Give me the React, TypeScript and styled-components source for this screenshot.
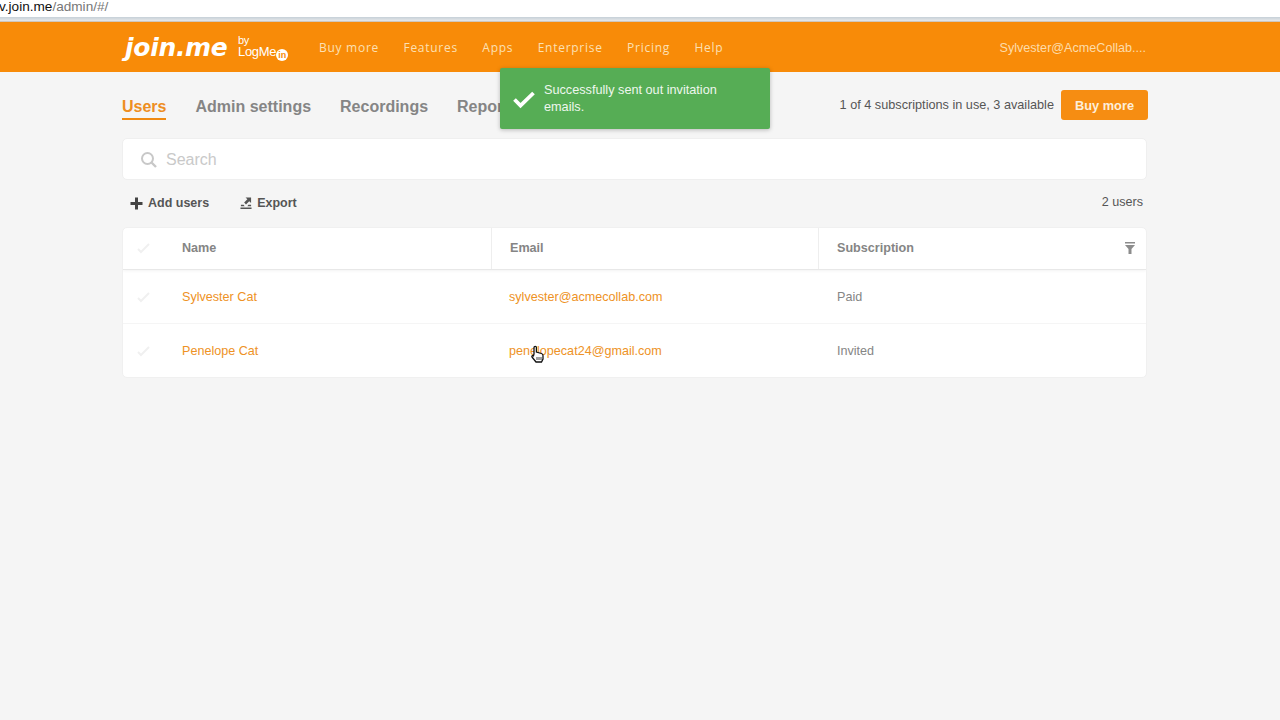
import styled, { createGlobalStyle } from 'styled-components';

const GlobalStyle = createGlobalStyle`
  html, body {
    margin: 0;
    padding: 0;
    height: 100%;
    background: #f5f5f5;
    font-family: "Liberation Sans", Arial, sans-serif;
    overflow: hidden;
  }
`;

const Page = styled.div`
  position: relative;
  height: 720px;
  background: #f5f5f5;
`;

const UrlBar = styled.div`
  height: 17px;
  background: #fff;
  font-size: 13.6px;
  line-height: 14px;
  color: #777;
  white-space: nowrap;
  overflow: hidden;
  b {
    font-weight: normal;
    color: #111;
    margin-left: -1px;
  }
`;

const UrlEdge = styled.div`
  height: 5px;
  background: linear-gradient(#c6d0d8, #e6e8ea 80%, #b9a68c);
`;

const TopBar = styled.header`
  height: 49px;
  background: #f88b08;
  display: flex;
  align-items: center;
  padding: 1px 134px 0 122px;
`;

const Logo = styled.div`
  display: flex;
  align-items: center;
  width: 197px;
  color: #fff;
`;

const LogoMark = styled.span`
  font-family: "DejaVu Sans", sans-serif;
  font-weight: bold;
  font-style: italic;
  font-size: 25px;
  letter-spacing: -0.3px;
  line-height: 30px;
  width: 113px;
  margin-left: 3px;
`;

const LogoBy = styled.span`
  display: flex;
  flex-direction: column;
  line-height: 11px;
  letter-spacing: -0.3px;
  color: #fff;
`;

const LogoByWord = styled.span`
  font-size: 11px;
`;

const LogoName = styled.span`
  font-size: 13px;
  white-space: nowrap;
`;

const LogoIn = styled.i`
  display: inline-block;
  width: 12px;
  height: 12px;
  line-height: 12px;
  border-radius: 50%;
  background: #fff;
  color: #f88b08;
  font-style: normal;
  font-weight: bold;
  font-size: 9px;
  text-align: center;
  letter-spacing: 0;
  vertical-align: -2px;
`;

const MainNav = styled.nav`
  display: flex;
  gap: 24.5px;
  flex: 1;
`;

const NavLink = styled.a`
  font-family: "Open Sans", sans-serif;
  font-size: 12px;
  letter-spacing: 0.72px;
  color: #fce0b4;
`;

const Account = styled.div`
  font-size: 12.6px;
  color: #fddcaa;
`;

const Content = styled.main`
  width: 1025px;
  margin-left: 122px;
`;

const TabRow = styled.div`
  height: 66px;
  display: flex;
  align-items: flex-start;
  justify-content: space-between;
`;

const Tabs = styled.div`
  display: flex;
  gap: 29px;
  padding-top: 25px;
`;

const Tab = styled.a<{ $active?: boolean }>`
  font-size: 16px;
  line-height: 20px;
  font-weight: bold;
  padding-bottom: 1px;
  color: ${(props) => (props.$active ? '#ee8e22' : '#858585')};
  border-bottom: 2px solid ${(props) => (props.$active ? '#f08a12' : 'transparent')};
`;

const Usage = styled.div`
  display: flex;
  align-items: center;
  gap: 7px;
  margin-right: -1px;
  padding-top: 18px;
  font-size: 12.7px;
  color: #555;
`;

const BuyButton = styled.button`
  width: 87px;
  height: 30px;
  border: 0;
  border-radius: 3px;
  background: #f68d12;
  color: #fdeeda;
  font-family: inherit;
  font-size: 12.8px;
  font-weight: bold;
  padding: 0;
`;

const Toast = styled.div`
  position: absolute;
  left: 500px;
  top: 68px;
  width: 270px;
  height: 61px;
  box-sizing: border-box;
  display: flex;
  align-items: center;
  gap: 8px;
  padding: 0 24px 0 12px;
  background: #56ad55;
  border-radius: 2px;
  box-shadow: 0 1px 4px rgba(0, 0, 0, 0.25);
  color: #eef7ee;
  font-size: 12.7px;
  line-height: 17px;
`;

const ToastIcon = styled.svg`
  flex: none;
`;

const Search = styled.div`
  height: 39px;
  display: flex;
  align-items: center;
  gap: 8px;
  padding: 1px 0 0 17px;
  background: #fff;
  border: 1px solid #efefef;
  border-radius: 5px;
  color: #c9c9c9;
  font-size: 16px;
`;

const Toolbar = styled.div`
  height: 47px;
  display: flex;
  align-items: center;
  justify-content: space-between;
`;

const Actions = styled.div`
  display: flex;
  gap: 31px;
  padding: 0 0 1px 8px;
`;

const Action = styled.a`
  display: flex;
  align-items: center;
  gap: 5px;
  font-size: 12.5px;
  font-weight: bold;
  color: #555;
`;

const UserCount = styled.div`
  font-size: 12.6px;
  color: #555;
  margin: -3px 4px 0 0;
`;

const Table = styled.div`
  background: #fff;
  border: 1px solid #f0f0f0;
  border-radius: 5px;
  overflow: hidden;
`;

const Row = styled.div<{ $head?: boolean; $last?: boolean }>`
  display: grid;
  grid-template-columns: 368px 327px 1fr;
  align-items: stretch;
  height: ${(props) => (props.$head ? '41px' : '53px')};
  border-bottom: ${(props) =>
    props.$head ? '1px solid #e8e8e8' : props.$last ? '0' : '1px solid #f5f5f5'};
  box-shadow: ${(props) => (props.$head ? '0 1px 3px rgba(0, 0, 0, 0.05)' : 'none')};
`;

const Cell = styled.div<{ $head?: boolean; $inset: number; $divided?: boolean }>`
  position: relative;
  display: flex;
  align-items: center;
  gap: 30px;
  padding-left: ${(props) => props.$inset}px;
  padding-bottom: ${(props) => (props.$head ? '1px' : '0')};
  border-left: ${(props) => (props.$divided ? '1px solid #eeeeee' : '0')};
  font-size: 12.6px;
  font-weight: ${(props) => (props.$head ? 'bold' : 'normal')};
  color: #858585;
`;

const OrangeLink = styled.a`
  color: #ee9225;
`;

const FilterIcon = styled.svg`
  position: absolute;
  right: 11px;
  top: 14px;
`;

const Cursor = styled.svg`
  position: absolute;
  left: 530px;
  top: 345px;
`;

function RowCheck() {
  return (
    <svg width="16" height="12" viewBox="0 0 16 12" fill="none">
      <path d="M2 7l3 3 8-8" stroke="#f0f0f0" strokeWidth="2" />
    </svg>
  );
}

function App() {
  const users = [
    { name: 'Sylvester Cat', email: 'sylvester@acmecollab.com', plan: 'Paid' },
    { name: 'Penelope Cat', email: 'penelopecat24@gmail.com', plan: 'Invited' },
  ];

  return (
    <Page>
      <GlobalStyle />
      <UrlBar><b>v.join.me</b>/admin/#/</UrlBar>
      <UrlEdge />
      <TopBar>
        <Logo>
          <LogoMark>join.me</LogoMark>
          <LogoBy>
            <LogoByWord>by</LogoByWord>
            <LogoName>LogMe<LogoIn>in</LogoIn></LogoName>
          </LogoBy>
        </Logo>
        <MainNav>
          <NavLink>Buy more</NavLink>
          <NavLink>Features</NavLink>
          <NavLink>Apps</NavLink>
          <NavLink>Enterprise</NavLink>
          <NavLink>Pricing</NavLink>
          <NavLink>Help</NavLink>
        </MainNav>
        <Account>Sylvester@AcmeCollab....</Account>
      </TopBar>
      <Content>
        <TabRow>
          <Tabs>
            <Tab $active>Users</Tab>
            <Tab>Admin settings</Tab>
            <Tab>Recordings</Tab>
            <Tab>Reports</Tab>
          </Tabs>
          <Usage>
            1 of 4 subscriptions in use, 3 available
            <BuyButton>Buy more</BuyButton>
          </Usage>
        </TabRow>
        <Search>
          <svg width="18" height="18" viewBox="0 0 18 18" fill="none">
            <circle cx="7.5" cy="7.5" r="5.5" stroke="#c8c8c8" strokeWidth="2" />
            <path d="M11.5 11.5L16 16" stroke="#c8c8c8" strokeWidth="2.4" />
          </svg>
          Search
        </Search>
        <Toolbar>
          <Actions>
            <Action>
              <svg width="13" height="13" viewBox="0 0 13 13">
                <path d="M5 0.5h3v4.500h4.500v3H8v4.500H5V8H0.500V5H5z" fill="#444" />
              </svg>
              Add users
            </Action>
            <Action>
              <svg width="12" height="14" viewBox="0 0 13 14">
                <path d="M6 1h6v6l-2-2-3.500 3.500-2-2L8 3z" fill="#555" />
                <path d="M1 9h3l1 1.500h3L9 9h3v1.500H1zM0.500 12h12v1.500H0.500z" fill="#555" />
              </svg>
              Export
            </Action>
          </Actions>
          <UserCount>2 users</UserCount>
        </Toolbar>
        <Table>
          <Row $head>
            <Cell $head $inset={13}><RowCheck /><span>Name</span></Cell>
            <Cell $head $inset={18} $divided>Email</Cell>
            <Cell $head $inset={18} $divided>
              Subscription
              <FilterIcon width="10" height="12" viewBox="0 0 10 12">
                <path d="M0 0h10v1.500H0zM0 3h10L6.500 7v5h-3V7z" fill="#8c8c8c" />
              </FilterIcon>
            </Cell>
          </Row>
          {users.map((user, i) => (
            <Row key={user.email} $last={i === users.length - 1}>
              <Cell $inset={13}><RowCheck /><OrangeLink>{user.name}</OrangeLink></Cell>
              <Cell $inset={18}><OrangeLink>{user.email}</OrangeLink></Cell>
              <Cell $inset={19}>{user.plan}</Cell>
            </Row>
          ))}
        </Table>
      </Content>
      <Toast>
        <ToastIcon width="24" height="20" viewBox="0 0 24 20" fill="none">
          <path d="M2.500 10.500l6 6L21.500 4" stroke="#fff" strokeWidth="3.800" />
        </ToastIcon>
        <span>Successfully sent out invitation emails.</span>
      </Toast>
      <Cursor width="14" height="18" viewBox="0 0 14 18">
        <path
          d="M4 9V2.500a1.200 1.200 0 0 1 2.400 0V7l5 1.500c1 .3 1.600 1 1.600 2V14l-1.500 3H6l-4-5c-.6-.9.6-2 1.500-1.200z"
          fill="#fff"
          stroke="#111"
          strokeWidth="1.300"
        />
        <path d="M7 12v3M9 12v3M11 12v3" stroke="#111" strokeWidth="0.800" />
      </Cursor>
    </Page>
  );
}

export default App;
